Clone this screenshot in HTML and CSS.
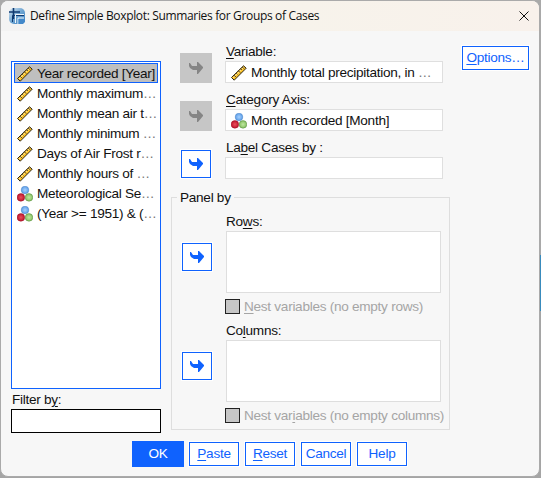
FILE: index.html
```html
<!DOCTYPE html>
<html lang="en">
<head>
<meta charset="utf-8">
<title>Define Simple Boxplot</title>
<link rel="stylesheet" href="styles.css">
</head>
<body>
<svg class="defs" aria-hidden="true">
  <defs>
    <radialGradient id="blue"><stop offset="0" stop-color="#a5d0ff"/><stop offset="1" stop-color="#5c9ee8"/></radialGradient>
    <radialGradient id="red"><stop offset="0" stop-color="#e9505c"/><stop offset="1" stop-color="#c0132c"/></radialGradient>
    <radialGradient id="green"><stop offset="0" stop-color="#c0e8a0"/><stop offset="1" stop-color="#85c060"/></radialGradient>
    <linearGradient id="globe" x1="0" y1="0" x2="1" y2="1"><stop offset="0" stop-color="#dbe9f3"/><stop offset=".5" stop-color="#6fa5d2"/><stop offset="1" stop-color="#3a7fc0"/></linearGradient>
    <symbol id="ruler" viewBox="0 0 16 16">
      <path d="M.5 12.5 12.5.8l2.7 2.4L3.2 15.2z" fill="#ffc426" stroke="#28241c"/>
      <path d="M2.2 12.8 13 2.2" stroke="#fff0b0" stroke-width=".8"/>
      <path d="M3 10.2l1.8 1.8M5.2 8l1.2 1.2M7.4 5.8l1.8 1.8M9.6 3.8l1.2 1.2M11.4 2l1.4 1.6" stroke="#28241c" stroke-width=".9"/>
    </symbol>
    <symbol id="nominal" viewBox="0 0 16 16">
      <circle cx="8" cy="4" r="3.8" fill="url(#blue)" stroke="#4b83c5" stroke-width=".5"/>
      <circle cx="3.9" cy="11.4" r="3.8" fill="url(#red)" stroke="#99162b" stroke-width=".5"/>
      <circle cx="12" cy="11.4" r="3.8" fill="url(#green)" stroke="#568b40" stroke-width=".5"/>
    </symbol>
    <symbol id="arrow" viewBox="0 0 14 14">
      <path d="M0 2h1l2 3h5V1h1l5 5v1L9 13H8V9H4L1 7 0 5z"/>
    </symbol>
  </defs>
</svg>
<div class="window">
  <header class="titlebar">
    <svg class="logo" viewBox="0 0 16 16">
      <rect width="16" height="16" rx="5" fill="url(#globe)"/>
      <path d="M4.5 0v11M0 4h11" stroke="#103a70" stroke-width="1.6"/>
      <path d="M3.5 14V7.5H15" fill="none" stroke="#103a70"/>
      <path d="M6.5 15V6.5H15M9 16v-6h6" fill="none" stroke="#f1f7fb"/>
      <path d="M9.5 16v-5H16v3l-2 2z" fill="#4389ca"/>
    </svg>
    <h1>Define Simple Boxplot: Summaries for Groups of Cases</h1>
    <svg class="close" viewBox="0 0 10 10"><path d="M.5.5l9 9M9.5.5l-9 9"/></svg>
  </header>
  <main class="content">
    <section class="source">
      <ul class="list">
        <li class="selected"><svg><use href="#ruler"/></svg>Year recorded [Year]</li>
        <li><svg><use href="#ruler"/></svg>Monthly maximum<i>…</i></li>
        <li><svg><use href="#ruler"/></svg>Monthly mean air t<i>…</i></li>
        <li><svg><use href="#ruler"/></svg>Monthly minimum <i>…</i></li>
        <li><svg><use href="#ruler"/></svg>Days of Air Frost r<i>…</i></li>
        <li><svg><use href="#ruler"/></svg>Monthly hours of <i>…</i></li>
        <li><svg><use href="#nominal"/></svg>Meteorological Se<i>…</i></li>
        <li><svg><use href="#nominal"/></svg>(Year &gt;= 1951) &amp; (<i>…</i></li>
      </ul>
      <label class="filter-label">Filter b<u>y</u>:</label>
      <div class="filter"></div>
    </section>
    <section class="targets">
      <div class="target">
        <button class="move disabled"><svg><use href="#arrow"/></svg></button>
        <div class="entry"><label><u>V</u>ariable:</label><div class="field"><svg><use href="#ruler"/></svg>Monthly total precipitation, in <i>…</i></div></div>
      </div>
      <div class="target">
        <button class="move disabled"><svg><use href="#arrow"/></svg></button>
        <div class="entry"><label><u>C</u>ategory Axis:</label><div class="field"><svg><use href="#nominal"/></svg>Month recorded [Month]</div></div>
      </div>
      <div class="target">
        <button class="move"><svg><use href="#arrow"/></svg></button>
        <div class="entry"><label>La<u>b</u>el Cases by :</label><div class="field"></div></div>
      </div>
      <fieldset class="panel">
        <legend>Panel by</legend>
        <div class="group">
          <button class="move"><svg><use href="#arrow"/></svg></button>
          <div class="entry"><label>Ro<u>w</u>s:</label><div class="area"></div>
            <div class="nest"><span class="box"></span><span><u>N</u>est variables (no empty rows)</span></div></div>
        </div>
        <div class="group">
          <button class="move"><svg><use href="#arrow"/></svg></button>
          <div class="entry"><label>Co<u>l</u>umns:</label><div class="area"></div>
            <div class="nest"><span class="box"></span><span>Nest var<u>i</u>ables (no empty columns)</span></div></div>
        </div>
      </fieldset>
    </section>
    <button class="button options"><span><u>O</u>ptions…</span></button>
  </main>
  <footer class="actions">
    <button class="button primary">OK</button>
    <button class="button"><span><u>P</u>aste</span></button>
    <button class="button"><span><u>R</u>eset</span></button>
    <button class="button">Cancel</button>
    <button class="button">Help</button>
  </footer>
</div>
</body>
</html>
```
FILE: styles.css
```css
* { box-sizing: border-box; }
body {
  margin: 0;
  width: 541px;
  height: 478px;
  padding: 0 1px 1px 0;
  overflow: hidden;
  background: linear-gradient(#a9a9a9 0 255px, #398bbd 255px 311px, #a5a5a5 311px);
  font: 13.6px/16px "Liberation Sans", sans-serif;
  letter-spacing: -.28px;
  color: #111;
}
.defs { position: absolute; width: 0; height: 0; }
.window {
  width: 540px;
  height: 477px;
  border: 1px solid #aaa;
  border-radius: 8px;
  overflow: hidden;
  background: #f7f7f7;
}
.titlebar {
  display: flex;
  align-items: center;
  height: 30px;
  padding: 0 10px 0 8px;
  background: linear-gradient(90deg, #f3f3f3, #f7f3eb 55%, #f8f1eb);
}
.logo { width: 16px; height: 16px; }
.titlebar h1 {
  flex: 1;
  margin: 0 0 0 5px;
  font: 12px/16px "Open Sans", sans-serif;
  letter-spacing: -.34px;
  white-space: nowrap;
}
.close { width: 10px; height: 10px; stroke: #111; fill: none; }
.content { display: flex; height: 409px; padding-left: 10px; }
.source { width: 150px; margin-top: 30px; }
.list {
  height: 328px;
  margin: 0;
  padding: 1px 2px;
  list-style: none;
  background: #fff;
  border: 1px solid #0f62fe;
}
.list li {
  display: flex;
  align-items: center;
  height: 20px;
  padding: 1px 0 0 3px;
  white-space: pre;
}
.list svg, .field svg { flex: none; width: 16px; height: 16px; margin-right: 4px; }
.list .selected { width: 144px; padding: 1px 0 0 2px; background: #bfbfbf; border: 1px solid #0f62fe; }
i { font-style: normal; color: #777; }
u { text-decoration-thickness: 1px; text-underline-offset: 2px; }
.filter-label { display: block; height: 20px; padding: 3px 0 0 1px; }
.filter { height: 24px; background: #fff; border: 1px solid #000; }
.targets { width: 280px; margin-left: 10px; padding-top: 12px; }
.target { display: flex; gap: 13px; height: 48px; padding-left: 9px; }
.move {
  display: grid;
  place-items: center;
  flex: none;
  width: 30px;
  height: 28px;
  margin: 11px 1px 0;
  padding: 0;
  background: #fff;
  border: 1px solid #0f62fe;
  box-shadow: 0 0 0 1px #fff;
}
.move svg { width: 14px; height: 14px; fill: #0f62fe; }
.move.disabled {
  width: 32px;
  height: 30px;
  margin: 10px 0 0;
  background: #c6c6c6;
  border: 0;
  box-shadow: none;
}
.move.disabled svg { fill: #858585; }
.entry label { display: block; height: 18px; padding: 1px 0 0 1px; }
.field {
  display: flex;
  align-items: center;
  width: 218px;
  height: 22px;
  padding: 2px 0 0 5px;
  white-space: pre;
  background: #fff;
  border: 1px solid #dfdfdf;
}
.panel {
  width: 279px;
  height: 241px;
  margin: 2px 0 0;
  padding: 8px 0 0 10px;
  border: 1px solid #dedede;
}
.panel legend { margin-left: -5px; padding: 1px 3px 0; height: 16px; }
.group { display: flex; gap: 13px; height: 109px; }
.group .move { margin: 30px 0 0; }
.area { width: 215px; height: 62px; margin-left: 1px; background: #fff; border: 1px solid #dedede; }
.nest { display: flex; gap: 4px; height: 15px; margin-top: 6px; color: #a5a5a5; white-space: nowrap; line-height: 16px; }
.box { width: 15px; height: 15px; background: #c6c6c6; border: 1px solid #222; }
.button {
  display: flex;
  align-items: center;
  justify-content: center;
  width: 50px;
  height: 24px;
  padding: 0;
  color: #0f62fe;
  font: inherit;
  letter-spacing: inherit;
  background: #fff;
  border: 1px solid #0f62fe;
  box-shadow: 0 0 0 1px #fff;
}
.options { width: 67px; margin: 15px 0 0 11px; }
.actions { display: flex; gap: 6px; align-items: center; height: 26px; margin: 1px 0 0 131px; }
.primary { width: 52px; height: 26px; margin-right: -1px; background: #0f62fe; color: #fff; box-shadow: none; }
```
